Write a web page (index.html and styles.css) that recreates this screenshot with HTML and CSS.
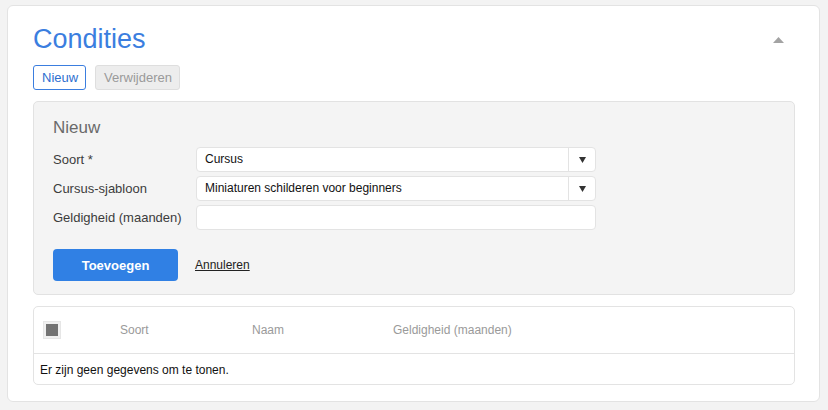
FILE: index.html
```html
<!DOCTYPE html>
<html lang="nl">
<head>
<meta charset="utf-8">
<title>Condities</title>
<link rel="stylesheet" href="styles.css">
</head>
<body>
<section class="card">
  <header class="card-head">
    <h1 class="title">Condities</h1>
    <button class="collapse" type="button" aria-label="Inklappen">
      <svg width="11" height="6" viewBox="0 0 11 6"><path d="M5.5 0 L11 6 L0 6 Z" fill="#a3a3a3"/></svg>
    </button>
  </header>

  <div class="toolbar">
    <button class="btn btn-outline" type="button">Nieuw</button>
    <button class="btn btn-disabled" type="button" disabled>Verwijderen</button>
  </div>

  <div class="panel">
    <h2 class="panel-title">Nieuw</h2>
    <div class="form">
      <label class="label">Soort *</label>
      <div class="select">
        <span class="select-value">Cursus</span>
        <span class="select-arrow"><svg width="7" height="6" viewBox="0 0 7 6"><path d="M0 0 H7 L3.5 6 Z" fill="#333"/></svg></span>
      </div>

      <label class="label">Cursus-sjabloon</label>
      <div class="select">
        <span class="select-value">Miniaturen schilderen voor beginners</span>
        <span class="select-arrow"><svg width="7" height="6" viewBox="0 0 7 6"><path d="M0 0 H7 L3.5 6 Z" fill="#333"/></svg></span>
      </div>

      <label class="label">Geldigheid (maanden)</label>
      <input class="input" type="text">
    </div>
    <div class="actions">
      <button class="btn-primary" type="button">Toevoegen</button>
      <a class="link" href="#">Annuleren</a>
    </div>
  </div>

  <div class="grid">
    <div class="grid-head">
      <span class="cell cell-check"><span class="checkbox"></span></span>
      <span class="cell cell-soort">Soort</span>
      <span class="cell cell-naam">Naam</span>
      <span class="cell">Geldigheid (maanden)</span>
    </div>
    <div class="grid-empty">Er zijn geen gegevens om te tonen.</div>
  </div>
</section>
</body>
</html>
```

FILE: styles.css
```css
* { box-sizing: border-box; }

body {
  margin: 0;
  padding: 5px 8px 0 7px;
  background: #f3f3f3;
  font-family: "Liberation Sans", Arial, Helvetica, sans-serif;
  color: #222;
}

.card {
  width: 813px;
  height: 397px;
  background: #fff;
  border: 1px solid #e3e3e3;
  border-radius: 6px;
  padding: 0 24px 0 25px;
}

.card-head {
  display: flex;
  align-items: flex-start;
  justify-content: space-between;
  height: 59px;
  padding-top: 18px;
}

.title {
  margin: 0;
  font-size: 27px;
  line-height: 31px;
  font-weight: normal;
  color: #3b7edf;
}

.collapse {
  border: 0;
  background: none;
  padding: 0;
  margin: 13px 11px 0 0;
  display: flex;
}

.toolbar {
  display: flex;
  gap: 9px;
  height: 25px;
}

.btn {
  height: 25px;
  padding: 0 8px;
  border-radius: 3px;
  font-family: inherit;
  font-size: 13px;
}

.btn-outline {
  background: #fff;
  border: 1px solid #3b7edf;
  color: #2e6fcf;
  width: 53px;
}

.btn-disabled {
  background: #ededed;
  border: 1px solid #dedede;
  color: #9a9a9a;
  width: 85px;
}

.panel {
  margin-top: 11px;
  height: 194px;
  background: #f4f4f4;
  border: 1px solid #e2e2e2;
  border-radius: 5px;
  padding: 15px 20px 0 19px;
}

.panel-title {
  margin: 0 0 9px;
  font-size: 17px;
  font-weight: normal;
  color: #6a6a6a;
  line-height: 21px;
}

.form {
  display: grid;
  grid-template-columns: 143px 400px;
  grid-auto-rows: 25px;
  row-gap: 4px;
  align-items: center;
}

.label {
  font-size: 13px;
  color: #3c3c3c;
}

.select,
.input {
  height: 25px;
  background: #fff;
  border: 1px solid #e3e3e3;
  border-radius: 4px;
}

.select {
  display: flex;
  align-items: center;
}

.select-value {
  flex: 1;
  padding-left: 8px;
  padding-bottom: 2px;
  font-size: 12px;
  color: #111;
}

.select-arrow {
  width: 27px;
  height: 100%;
  border-left: 1px solid #e3e3e3;
  display: flex;
  align-items: center;
  justify-content: center;
}

.actions {
  display: flex;
  align-items: center;
  gap: 17px;
  margin-top: 19px;
}

.btn-primary {
  width: 125px;
  height: 32px;
  border: 0;
  border-radius: 4px;
  background: #3080e4;
  color: #fff;
  font-family: inherit;
  font-size: 13px;
  font-weight: bold;
}

.link {
  font-size: 12px;
  color: #222;
  text-decoration: underline;
}

.grid {
  margin-top: 11px;
  height: 79px;
  border: 1px solid #e3e3e3;
  border-radius: 5px;
}

.grid-head {
  display: flex;
  align-items: center;
  height: 47px;
  border-bottom: 1px solid #e3e3e3;
  font-size: 12px;
  color: #9a9a9a;
}

.cell-check {
  width: 86px;
  padding-left: 10px;
  display: flex;
}

.checkbox {
  width: 16px;
  height: 16px;
  border: 2px solid #f0f0f0;
  background: #737373;
  outline: 1px solid #e6e6e6;
}

.cell-soort { width: 132px; }
.cell-naam { width: 141px; }

.grid-empty {
  height: 31px;
  display: flex;
  align-items: center;
  padding-left: 6px;
  font-size: 12px;
  color: #111;
}
```
